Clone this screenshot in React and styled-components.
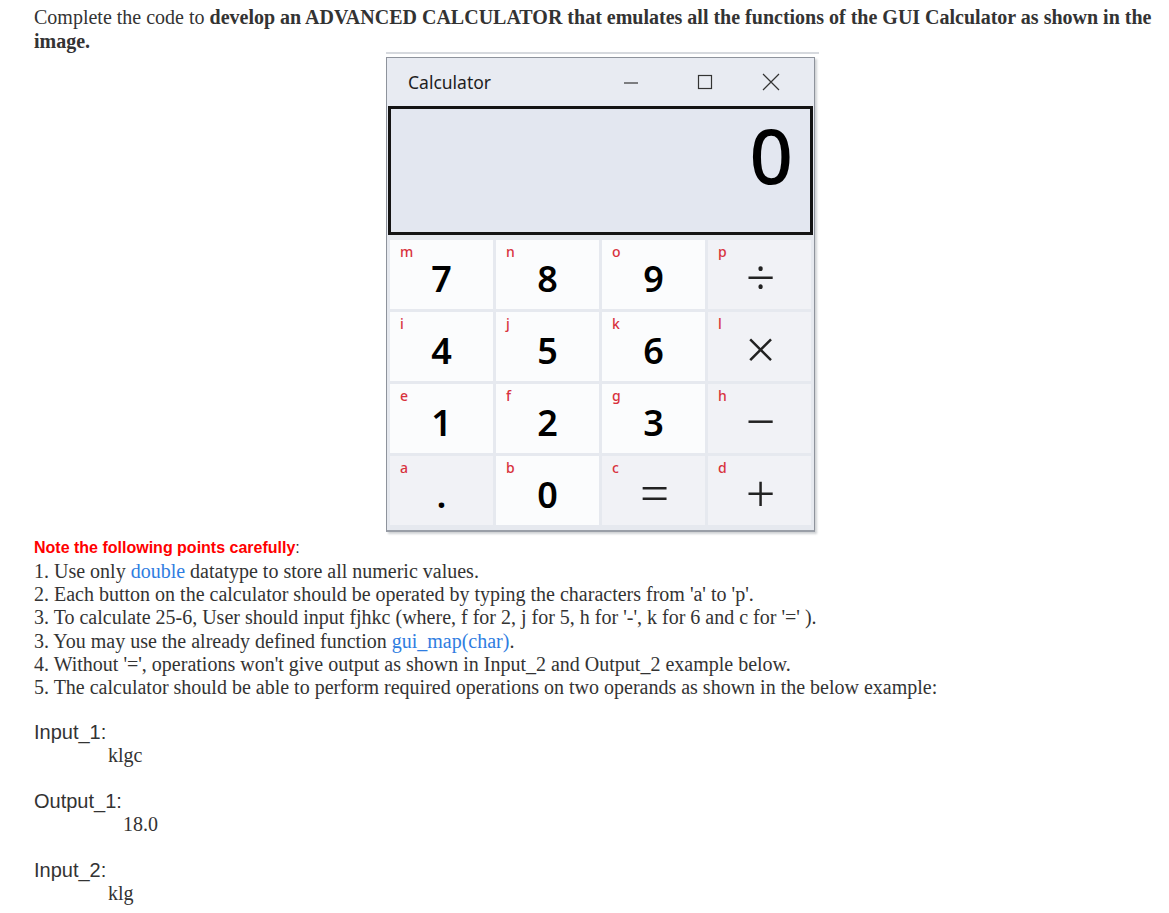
import React from "react";
import styled, { createGlobalStyle } from "styled-components";

const Global = createGlobalStyle`
  html, body { margin: 0; padding: 0; background: #ffffff; }
  body { font-family: "Liberation Serif", "Times New Roman", serif; color: #333333; }
`;

const Page = styled.div`
  padding: 5px 12px 20px 34px;
  width: 1169px;
  box-sizing: border-box;
`;

const Heading = styled.p`
  margin: 0;
  font-size: 20px;
  line-height: 24px;
  color: #333;
  b { font-weight: 700; }
`;

const WindowFrame = styled.div`
  margin: -1px 0 0 352px;
  width: 433px;
  border-top: 2px solid #d6d9de;
  padding-top: 3px;
`;

const Window = styled.div`
  width: 429px;
  box-sizing: border-box;
  background: #e8ebf2;
  border: 1px solid #8e939c;
  border-bottom: 2px solid #9a9fa8;
  box-shadow: 2px 2px 2px rgba(120, 125, 135, 0.35);
  display: flex;
  flex-direction: column;
`;

const TitleBar = styled.div`
  height: 48px;
  display: flex;
  align-items: center;
  padding-left: 21px;
  font-family: "Noto Sans", "Open Sans", sans-serif;
  font-size: 17.5px;
  color: #1e1e1e;
`;

const Title = styled.span`
  flex: 1;
`;

const Controls = styled.div`
  display: flex;
  align-items: center;
  height: 100%;
  padding-right: 10px;
`;

const ControlButton = styled.div`
  width: ${(p) => p.$w}px;
  height: 100%;
  display: flex;
  align-items: center;
  justify-content: center;
  color: #333;
`;

const Display = styled.div`
  margin: 0 1px 0 1px;
  height: 123px;
  box-sizing: content-box;
  border: 3px solid #141414;
  background: #e3e7f0;
  display: flex;
  align-items: flex-start;
  justify-content: flex-end;
  padding: 8px 17px 0 0;
  height: 115px;
  font-family: "Noto Sans", "Open Sans", sans-serif;
  font-size: 76px;
  line-height: 1;
  font-weight: 500;
  color: #000;
`;

const Grid = styled.div`
  display: grid;
  grid-template-columns: repeat(4, 1fr);
  grid-auto-rows: 69px;
  gap: 3px;
  padding: 5px 3px 5px 3px;
  background: #e6e9ef;
`;

const Key = styled.div`
  position: relative;
  background: ${(p) => (p.$gray ? "#f1f2f6" : "#fbfcfd")};
  display: flex;
  align-items: center;
  justify-content: center;
  padding-top: ${(p) => (p.$op ? "2px" : "8px")};
  box-sizing: border-box;
  font-family: "Noto Sans", "Open Sans", sans-serif;
  font-size: ${(p) => (p.$op ? "52px" : "36px")};
  line-height: 1;
  font-weight: ${(p) => (p.$op ? 300 : 600)};
  color: ${(p) => (p.$op ? "#222" : "#000")};
`;

const KeyLabel = styled.span`
  position: absolute;
  left: 10px;
  top: 5px;
  font-family: "Noto Sans", "Open Sans", sans-serif;
  font-size: 14px;
  line-height: 1;
  font-weight: 500;
  color: #d8323d;
`;

const KeyText = styled.span`
  margin-left: ${(p) => (p.$op ? "2px" : "0px")};
`;

const NoteHead = styled.div`
  margin-top: 6px;
  font-family: "Liberation Sans", Arial, sans-serif;
  font-size: 16px;
  line-height: 20px;
  color: #333;
  b { color: #ff0000; font-weight: 700; }
`;

const Points = styled.div`
  margin-top: 2px;
  font-size: 20px;
  line-height: 23.2px;
  color: #333;
`;

const Blue = styled.span`
  color: #2f7de1;
`;

const Example = styled.div`
  margin-top: ${(p) => p.$top}px;
`;

const ExLabel = styled.div`
  font-family: "Liberation Sans", Arial, sans-serif;
  font-size: 20px;
  line-height: 22px;
  color: #333;
`;

const ExValue = styled.div`
  padding-left: ${(p) => p.$indent}px;
  font-size: 20px;
  line-height: 24px;
  color: #333;
`;

const keys = [
  ["m", "7"], ["n", "8"], ["o", "9"], ["p", "÷", true, true],
  ["i", "4"], ["j", "5"], ["k", "6"], ["l", "×", true, true],
  ["e", "1"], ["f", "2"], ["g", "3"], ["h", "−", true, true],
  ["a", ".", false, true], ["b", "0"], ["c", "=", true, true], ["d", "+", true, true],
];

export default function App() {
  return (
    <>
      <Global />
      <Page>
        <Heading>
          Complete the code to <b>develop an ADVANCED CALCULATOR that emulates all the functions of the GUI Calculator as shown in the image.</b>
        </Heading>
        <WindowFrame>
          <Window>
            <TitleBar>
              <Title>Calculator</Title>
              <Controls>
                <ControlButton $w={82}>
                  <svg width="16" height="16" viewBox="0 0 16 16">
                    <line x1="1" y1="9" x2="15" y2="9" stroke="#333" strokeWidth="1.2" />
                  </svg>
                </ControlButton>
                <ControlButton $w={66}>
                  <svg width="16" height="16" viewBox="0 0 16 16">
                    <rect x="1.5" y="1.5" width="13" height="13" fill="none" stroke="#333" strokeWidth="1.2" />
                  </svg>
                </ControlButton>
                <ControlButton $w={66}>
                  <svg width="18" height="18" viewBox="0 0 18 18">
                    <path d="M1 1 L17 17 M17 1 L1 17" stroke="#333" strokeWidth="1.2" />
                  </svg>
                </ControlButton>
              </Controls>
            </TitleBar>
            <Display>0</Display>
            <Grid>
              {keys.map(([l, t, op, gray]) => (
                <Key key={l} $op={op} $gray={gray}>
                  <KeyLabel>{l}</KeyLabel>
                  <KeyText $op={op}>{t}</KeyText>
                </Key>
              ))}
            </Grid>
          </Window>
        </WindowFrame>
        <NoteHead>
          <b>Note the following points carefully</b>:
        </NoteHead>
        <Points>
          <div>1. Use only <Blue>double</Blue> datatype to store all numeric values.</div>
          <div>2. Each button on the calculator should be operated by typing the characters from 'a' to 'p'.</div>
          <div>3. To calculate 25-6, User should input fjhkc (where, f for 2, j for 5, h for '-', k for 6 and c for '=' ).</div>
          <div>3. You may use the already defined function <Blue>gui_map(char)</Blue>.</div>
          <div>4. Without '=', operations won't give output as shown in Input_2 and Output_2 example below.</div>
          <div>5. The calculator should be able to perform required operations on two operands as shown in the below example:</div>
        </Points>
        <Example $top={22}>
          <ExLabel>Input_1:</ExLabel>
          <ExValue $indent={74}>klgc</ExValue>
        </Example>
        <Example $top={23}>
          <ExLabel>Output_1:</ExLabel>
          <ExValue $indent={89}>18.0</ExValue>
        </Example>
        <Example $top={23}>
          <ExLabel>Input_2:</ExLabel>
          <ExValue $indent={74}>klg</ExValue>
        </Example>
      </Page>
    </>
  );
}
